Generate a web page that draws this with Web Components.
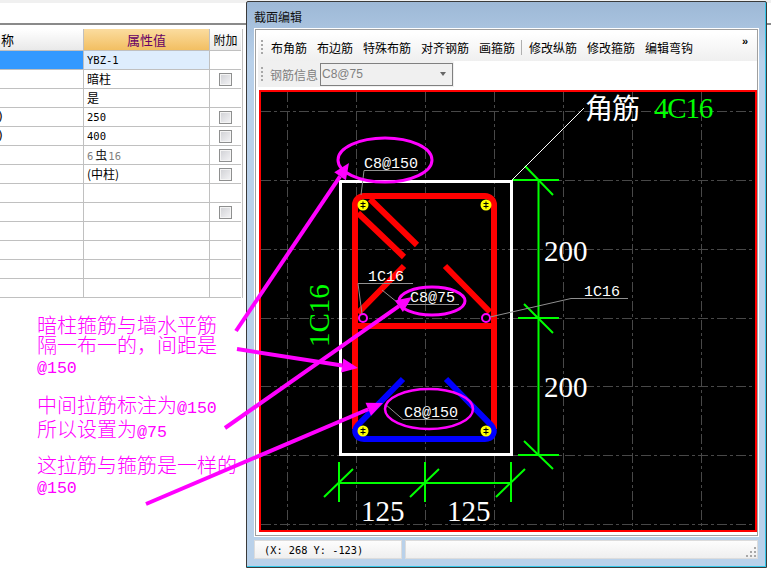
<!DOCTYPE html>
<html>
<head>
<meta charset="utf-8">
<style>
  html, body { margin: 0; padding: 0; background: #fff; }
  body { width: 771px; height: 588px; overflow: hidden; position: relative; font: 12px "Liberation Sans", "Noto Sans CJK SC", sans-serif; }
</style>
</head>
<body>
<prop-table></prop-table>

<section-window title-text="截面编辑" coords="(X: 268 Y: -123)">
  <rebar-drawing></rebar-drawing>
</section-window>

<markup-layer></markup-layer>

<script>
// 属性表格（左侧，被窗口遮住一部分）
class PropTable extends HTMLElement {
    constructor() {
        super();
        this.attachShadow({ mode: 'open' });
    }

    connectedCallback() {
        const rows = [
            { name: '', value: 'YBZ-1', mono: true, selected: true },
            { name: '', value: '暗柱', check: true },
            { name: '', value: '是' },
            { name: ')', value: '250', mono: true, check: true },
            { name: ')', value: '400', mono: true, check: true },
            { name: '', value: '6<b>虫</b>16', mono: true, muted: true, check: true },
            { name: '', value: '(中柱)', check: true },
            { name: '', value: '' },
            { name: '', value: '', check: true },
            { name: '', value: '' },
            { name: '', value: '' },
            { name: '', value: '' },
            { name: '', value: '' }
        ];
        const body = rows.map(r => `
            <div class="c name ${r.selected ? 'sel' : ''}"><span>${r.name}</span></div>
            <div class="c val ${r.selected ? 'cur' : ''} ${r.mono ? 'mono' : ''} ${r.muted ? 'muted' : ''}">${r.value}</div>
            <div class="c add">${r.check ? '<i></i>' : ''}</div>
        `).join('');

        this.shadowRoot.innerHTML = `
            <style>
                :host {
                    display: block;
                    width: 771px;
                    height: 588px;
                    box-sizing: border-box;
                    font: 12px "Noto Sans CJK SC", sans-serif;
                    color: #000;
                }
                .strip { height: 3px; background: #f0f0f0; }
                .rule { height: 2px; margin-top: 20px; background: #8a8a8a; }
                .grid {
                    margin-top: 4px;
                    width: 242px;
                    display: grid;
                    grid-template-columns: 84px 126px 31px;
                    grid-auto-rows: 19px;
                    border-right: 1px solid #c0c0c0;
                }
                .h {
                    height: 22px;
                    line-height: 22px;
                    text-align: center;
                    font-size: 13px;
                    background: linear-gradient(#fff, #e9e9e9);
                    border-bottom: 1px solid #c0c0c0;
                    box-sizing: border-box;
                    white-space: nowrap;
                }
                .h.first { text-align: left; padding-left: 1px; border-right: 1px solid #c0c0c0; }
                .h.on {
                    background: linear-gradient(#fbdc9f, #f2bf62);
                    color: #660066;
                    border-right: 1px solid #c0c0c0;
                }
                .h.last { font-size: 12px; }
                .c {
                    box-sizing: border-box;
                    border-bottom: 1px solid #c0c0c0;
                    line-height: 18px;
                    overflow: hidden;
                    white-space: nowrap;
                }
                .name { border-right: 1px solid #c0c0c0; position: relative; }
                .name span { display: block; margin-left: -3px; font: 12px "DejaVu Sans Mono", monospace; line-height: 18px; }
                .sel { background: #3399ff; }
                .val { padding-left: 3px; border-right: 1px solid #c0c0c0; }
                .cur { background: #deedfd; }
                .mono { font: 10.5px "DejaVu Sans Mono", monospace; line-height: 18px; }
                .muted { color: #808080; }
                .muted b { font: 12px "Noto Sans CJK SC", sans-serif; color: #222; margin: 0 1px 0 2px; }
                .add { display: flex; align-items: center; justify-content: center; }
                .add i {
                    display: block;
                    width: 13px;
                    height: 13px;
                    box-sizing: border-box;
                    border: 1px solid #8e8f8f;
                    background: linear-gradient(135deg, #cfd0d4, #f4f4f6);
                    box-shadow: inset 0 0 0 1px #f4f4f4;
                }
            </style>
            <div class="strip"></div>
            <div class="rule"></div>
            <div class="grid" style="grid-template-rows: 22px;">
                <div class="h first">称</div>
                <div class="h on">属性值</div>
                <div class="h last">附加</div>
                ${body}
            </div>
        `;
    }
}

// 截面编辑窗口
class SectionWindow extends HTMLElement {
    constructor() {
        super();
        this.attachShadow({ mode: 'open' });
    }

    connectedCallback() {
        const group1 = ['布角筋', '布边筋', '特殊布筋', '对齐钢筋', '画箍筋'];
        const group2 = ['修改纵筋', '修改箍筋', '编辑弯钩'];
        const btn = t => `<span class="btn">${t}</span>`;

        this.shadowRoot.innerHTML = `
            <style>
                :host {
                    display: flex;
                    flex-direction: column;
                    position: absolute;
                    left: 246px;
                    top: 1px;
                    width: 521px;
                    height: 567px;
                    box-sizing: border-box;
                    border: 1px solid #3a3a3a;
                    border-radius: 2px 2px 0 0;
                    padding: 0 7px 0 7px;
                    background: linear-gradient(#9db8d6 0, #b9d1ea 60px, #b9d1ea 100%);
                    box-shadow: inset -1px -1px 0 #35c6e8;
                    font: 12px "Noto Sans CJK SC", sans-serif;
                    color: #000;
                }
                .title { height: 26px; line-height: 30px; flex: none; white-space: nowrap; color: #111; }
                .client {
                    flex: none;
                    height: 509px;
                    box-sizing: border-box;
                    background: #fff;
                    padding: 1px;
                }
                .frame {
                    height: 100%;
                    box-sizing: border-box;
                    border: 1px solid #a0a0a0;
                    padding: 3px 0 3px 3px;
                    display: flex;
                    flex-direction: column;
                }
                .bar {
                    flex: none;
                    height: 28px;
                    margin-left: -1px;
                    display: flex;
                    align-items: center;
                    padding-left: 3px;
                    background: linear-gradient(#fff, #efefef);
                    position: relative;
                }
                .grip {
                    flex: none;
                    width: 2px;
                    height: 15px;
                    margin-right: 3px;
                    background: repeating-linear-gradient(#a8a8a8 0 2px, transparent 2px 4px);
                }
                .btn { padding: 0 5px; white-space: nowrap; }
                .sep { width: 1px; height: 15px; background: #b0b0b0; margin: 0 2px 0 1px; }
                .more {
                    position: absolute;
                    right: 9px;
                    top: 2px;
                    font: bold 11px "Liberation Sans", sans-serif;
                    line-height: 12px;
                }
                .bar2 {
                    flex: none;
                    height: 26px;
                    margin-left: -1px;
                    display: flex;
                    align-items: center;
                    width: 196px;
                    box-sizing: border-box;
                    padding-left: 3px;
                    background: #f0f0f0;
                    color: #808080;
                    border-radius: 0 2px 0 0;
                }
                .bar2 .grip { margin-right: 7px; }
                .combo {
                    margin-left: 2px;
                    width: 133px;
                    height: 23px;
                    flex: none;
                    box-sizing: border-box;
                    border: 1px solid #808080;
                    background: #f0f0f0;
                    display: flex;
                    align-items: center;
                    justify-content: space-between;
                    padding: 0 6px 0 1px;
                    font: 12px "Liberation Sans", sans-serif;
                }
                .combo i {
                    width: 0;
                    height: 0;
                    border: 3px solid transparent;
                    border-top: 4px solid #666;
                    border-bottom: 0;
                }
                .canvas {
                    flex: none;
                    margin-top: 3px;
                    height: 442px;
                    box-sizing: border-box;
                    border: 2px solid #ff0000;
                    background: #000;
                    overflow: hidden;
                }
                .status {
                    flex: none;
                    margin-top: 3px;
                    height: 19px;
                    display: flex;
                    gap: 3px;
                    margin-right: 1px;
                }
                .panel {
                    box-sizing: border-box;
                    border: 1px solid #dcdcdc;
                    background: linear-gradient(#fdfdfd, #efefef);
                    line-height: 17px;
                    position: relative;
                }
                .panel.a { width: 148px; padding-left: 9px; font: 10.3px "DejaVu Sans Mono", monospace; line-height: 18px; }
                .panel.b { flex: 1; }
                .dots {
                    position: absolute;
                    right: 1px;
                    bottom: 1px;
                    width: 10px;
                    height: 10px;
                    background:
                        linear-gradient(#a8a8a8, #a8a8a8) 8px 0 / 2px 2px no-repeat,
                        linear-gradient(#a8a8a8, #a8a8a8) 8px 4px / 2px 2px no-repeat,
                        linear-gradient(#a8a8a8, #a8a8a8) 4px 4px / 2px 2px no-repeat,
                        linear-gradient(#a8a8a8, #a8a8a8) 8px 8px / 2px 2px no-repeat,
                        linear-gradient(#a8a8a8, #a8a8a8) 4px 8px / 2px 2px no-repeat,
                        linear-gradient(#a8a8a8, #a8a8a8) 0 8px / 2px 2px no-repeat;
                }
            </style>
            <div class="title">${this.getAttribute('title-text')}</div>
            <div class="client">
                <div class="frame">
                    <div class="bar">
                        <span class="grip"></span>
                        ${group1.map(btn).join('')}
                        <span class="sep"></span>
                        ${group2.map(btn).join('')}
                        <span class="more">»</span>
                    </div>
                    <div class="bar2">
                        <span class="grip"></span>
                        <span>钢筋信息</span>
                        <div class="combo"><span>C8@75</span><i></i></div>
                    </div>
                    <div class="canvas"><slot></slot></div>
                </div>
            </div>
            <div class="status">
                <div class="panel a">${this.getAttribute('coords')}</div>
                <div class="panel b"><span class="dots"></span></div>
            </div>
        `;
    }
}

// 黑底配筋图，坐标直接用截图坐标
class RebarDrawing extends HTMLElement {
    constructor() {
        super();
        this.attachShadow({ mode: 'open' });
    }

    connectedCallback() {
        const vs = [287, 356, 425, 494, 563, 632, 701];
        const hs = [112, 181, 250, 319, 387, 456, 525];
        const grid = vs.map(x => `<line x1="${x + .5}" y1="93" x2="${x + .5}" y2="531"/>`).join('')
            + hs.map(y => `<line x1="261" y1="${y + .5}" x2="755" y2="${y + .5}"/>`).join('');

        const bar = (x, y) => `<circle cx="${x}" cy="${y}" r="5.5" fill="#ffff00"/>
            <path d="M${x - 2.5} ${y - 1.5}h5M${x - 2.5} ${y + 1.5}h5M${x} ${y - 3.5}v7" stroke="#000" stroke-width="1"/>`;
        const bar2 = (x, y) => `<circle cx="${x}" cy="${y}" r="4" fill="#000" stroke="#ff00ff" stroke-width="2"/>`;

        this.shadowRoot.innerHTML = `
            <style>
                :host { display: block; width: 494px; height: 438px; }
                svg { display: block; }
                .cad { font-family: "Liberation Mono", monospace; font-size: 15px; fill: #fff; }
                .dim { font-family: "Liberation Serif", serif; font-size: 29px; fill: #fff; }
            </style>
            <svg width="494" height="438" viewBox="261 93 494 438">
                <g stroke="#484848" stroke-width="1" stroke-dasharray="10 3 3 3" fill="none">${grid}</g>

                <rect x="340.5" y="182.5" width="171" height="273" fill="none" stroke="#fff" stroke-width="3"/>

                <g fill="none" stroke="#ff0000" stroke-width="6">
                    <path d="M355 430V206a9 9 0 0 1 9 -9H485a9 9 0 0 1 9 9V430"/>
                    <path d="M355 327H494"/>
                    <path d="M370 200L417 246M358 214L404 258M404 267L358 314M445 267L490 313"/>
                </g>
                <path d="M403 380L358 426C352 433 357 440 364 440H485C492 440 497 433 491 426L446 380" fill="none" stroke="#0000ff" stroke-width="6"/>

                ${bar(363, 206)}${bar(486, 206)}${bar(363, 432)}${bar(486, 432)}
                ${bar2(363, 319)}${bar2(486, 319)}

                <g fill="none" stroke="#00ff00" stroke-width="2">
                    <path d="M538.5 181V456"/>
                    <path d="M513 181H559M518 319H559M518 456H559"/>
                    <path d="M525 167L553 196M524 305L553 334M524 442L553 470"/>
                    <path d="M339 484H511M339 463V503M425 463V503M511 463V503"/>
                    <path d="M324 498L353 470M410 498L439 470M496 498L525 470"/>
                </g>

                <g fill="none" stroke="#909090" stroke-width="1">
                    <path d="M418 171.5H364L361 196"/>
                    <path d="M413 284.5H358L362 315"/>
                    <path d="M382 291L400 305.5H459"/>
                    <path d="M490 318L571 299.5H628"/>
                    <path d="M385 405L403 420.5H458"/>
                </g>
                <path d="M512 181L584 109" fill="none" stroke="#fff" stroke-width="1"/>

                <text class="cad" x="364" y="169">C8@150</text>
                <text class="cad" x="368" y="282">1C16</text>
                <text class="cad" x="410" y="303">C8@75</text>
                <text class="cad" x="584" y="297">1C16</text>
                <text class="cad" x="404" y="418">C8@150</text>

                <text class="dim" x="544" y="262">200</text>
                <text class="dim" x="544" y="398">200</text>
                <text class="dim" x="361" y="522">125</text>
                <text class="dim" x="447" y="522">125</text>
                <text x="585" y="120" style='font: 28px "Noto Sans CJK SC", sans-serif; fill: #fff; letter-spacing: -1px'>角筋</text>
                <text class="dim" x="654" y="119" style="fill:#00ff00; letter-spacing: -1.2px">4C16</text>
                <text class="dim" x="329" y="348" transform="rotate(-90 329 348)" style="fill:#00ff00">1C16</text>
            </svg>
        `;
    }
}

// 洋红色批注：说明文字、箭头、圈
class MarkupLayer extends HTMLElement {
    constructor() {
        super();
        this.attachShadow({ mode: 'open' });
    }

    connectedCallback() {
        const m = '#ff00ff';
        const arrow = (x1, y1, x2, y2) => {
            const a = Math.atan2(y2 - y1, x2 - x1), len = 16, w = 7;
            const bx = x2 - Math.cos(a) * len, by = y2 - Math.sin(a) * len;
            const nx = -Math.sin(a) * w, ny = Math.cos(a) * w;
            return `<line x1="${x1}" y1="${y1}" x2="${bx}" y2="${by}" stroke="${m}" stroke-width="4"/>
                <polygon points="${x2},${y2} ${bx + nx},${by + ny} ${bx - nx},${by - ny}" fill="${m}"/>`;
        };

        this.shadowRoot.innerHTML = `
            <style>
                :host {
                    display: block;
                    position: absolute;
                    left: 0;
                    top: 0;
                    width: 771px;
                    height: 588px;
                    pointer-events: none;
                }
                svg { position: absolute; left: 0; top: 0; }
                .note {
                    position: absolute;
                    left: 37px;
                    color: ${m};
                    font: 300 20px/20px "Noto Sans CJK SC", sans-serif;
                    white-space: nowrap;
                }
                .note b { font: 400 16.6px/20px "Liberation Mono", monospace; }
            </style>
            <svg width="771" height="588" fill="none">
                <ellipse cx="385" cy="160" rx="47" ry="22" stroke="${m}" stroke-width="3"/>
                <ellipse cx="432" cy="301" rx="33" ry="14" stroke="${m}" stroke-width="3"/>
                <ellipse cx="429" cy="409" rx="44" ry="20" stroke="${m}" stroke-width="2.5"/>
                ${arrow(236, 331, 349, 163)}
                ${arrow(237, 349, 358, 368)}
                ${arrow(225, 428, 412, 297)}
                ${arrow(146, 504, 383, 403)}
            </svg>
            <div class="note" style="top: 315px">暗柱箍筋与墙水平筋<br>隔一布一的&#xFF0C;间距是<br><b>@150</b></div>
            <div class="note" style="top: 395px">中间拉筋标注为<b>@150</b><br>所以设置为<b>@75</b></div>
            <div class="note" style="top: 455px">这拉筋与箍筋是一样的<br><b>@150</b></div>
        `;
    }
}

customElements.define('prop-table', PropTable);
customElements.define('section-window', SectionWindow);
customElements.define('rebar-drawing', RebarDrawing);
customElements.define('markup-layer', MarkupLayer);
</script>
</body>
</html>
